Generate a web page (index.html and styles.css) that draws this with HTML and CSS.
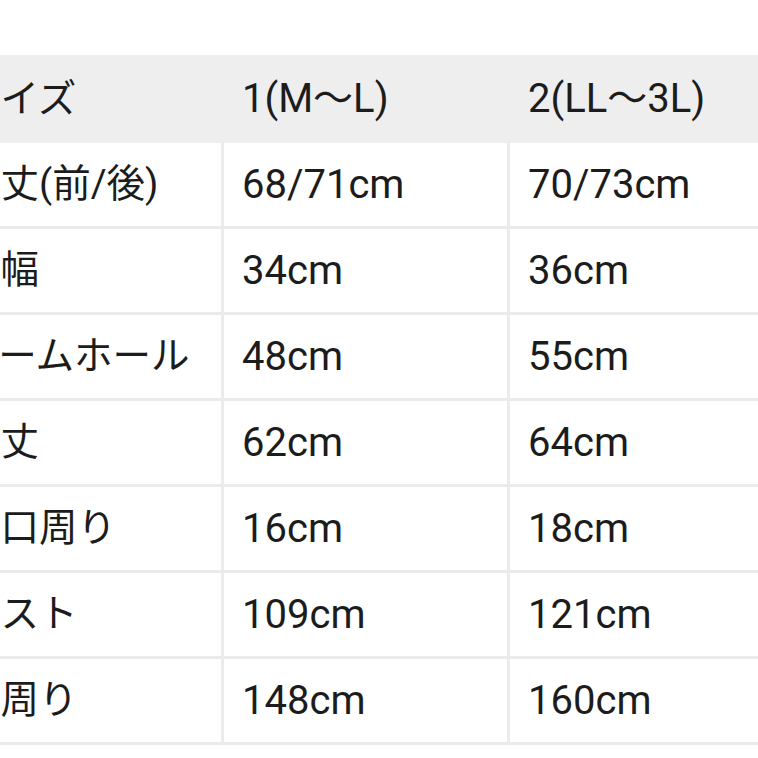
FILE: index.html
```html
<!DOCTYPE html>
<html lang="ja">
<head>
<meta charset="utf-8">
<link rel="stylesheet" href="styles.css">
</head>
<body>
<div class="table">
  <div class="row head">
    <div class="cell label">サイズ</div>
    <div class="cell">1(M〜L)</div>
    <div class="cell">2(LL〜3L)</div>
  </div>
  <div class="row">
    <div class="cell label">着丈(前/後)</div>
    <div class="cell">68/71cm</div>
    <div class="cell">70/73cm</div>
  </div>
  <div class="row">
    <div class="cell label">身幅</div>
    <div class="cell">34cm</div>
    <div class="cell">36cm</div>
  </div>
  <div class="row">
    <div class="cell label">アームホール</div>
    <div class="cell">48cm</div>
    <div class="cell">55cm</div>
  </div>
  <div class="row">
    <div class="cell label">袖丈</div>
    <div class="cell">62cm</div>
    <div class="cell">64cm</div>
  </div>
  <div class="row">
    <div class="cell label">袖口周り</div>
    <div class="cell">16cm</div>
    <div class="cell">18cm</div>
  </div>
  <div class="row">
    <div class="cell label">バスト</div>
    <div class="cell">109cm</div>
    <div class="cell">121cm</div>
  </div>
  <div class="row">
    <div class="cell label">裾周り</div>
    <div class="cell">148cm</div>
    <div class="cell">160cm</div>
  </div>
</div>
</body>
</html>
```

FILE: styles.css
```css
html, body {
  margin: 0;
  padding: 0;
  background: #ffffff;
  overflow: hidden;
}
body {
  font-family: Roboto, "Noto Sans CJK JP", sans-serif;
  color: #1c1c1c;
}
.table {
  margin-top: 55px;
  margin-left: -58px;
  width: 900px;
}
.row {
  display: grid;
  grid-template-columns: 282px 286px 1fr;
  height: 83px;
  border-bottom: 3px solid #ebebeb;
}
.cell {
  display: flex;
  align-items: center;
  padding-left: 18px;
  font-size: 40px;
  line-height: 1;
  white-space: nowrap;
  border-right: 3px solid #ebebeb;
}
.cell.label {
  padding-left: 20px;
  font-size: 38.5px;
}
.cell:last-child {
  border-right: none;
}
.row.head {
  height: 88px;
  background: #eeeeee;
  border-bottom: none;
}
.row.head .cell {
  border-right-color: #eeeeee;
}
```
